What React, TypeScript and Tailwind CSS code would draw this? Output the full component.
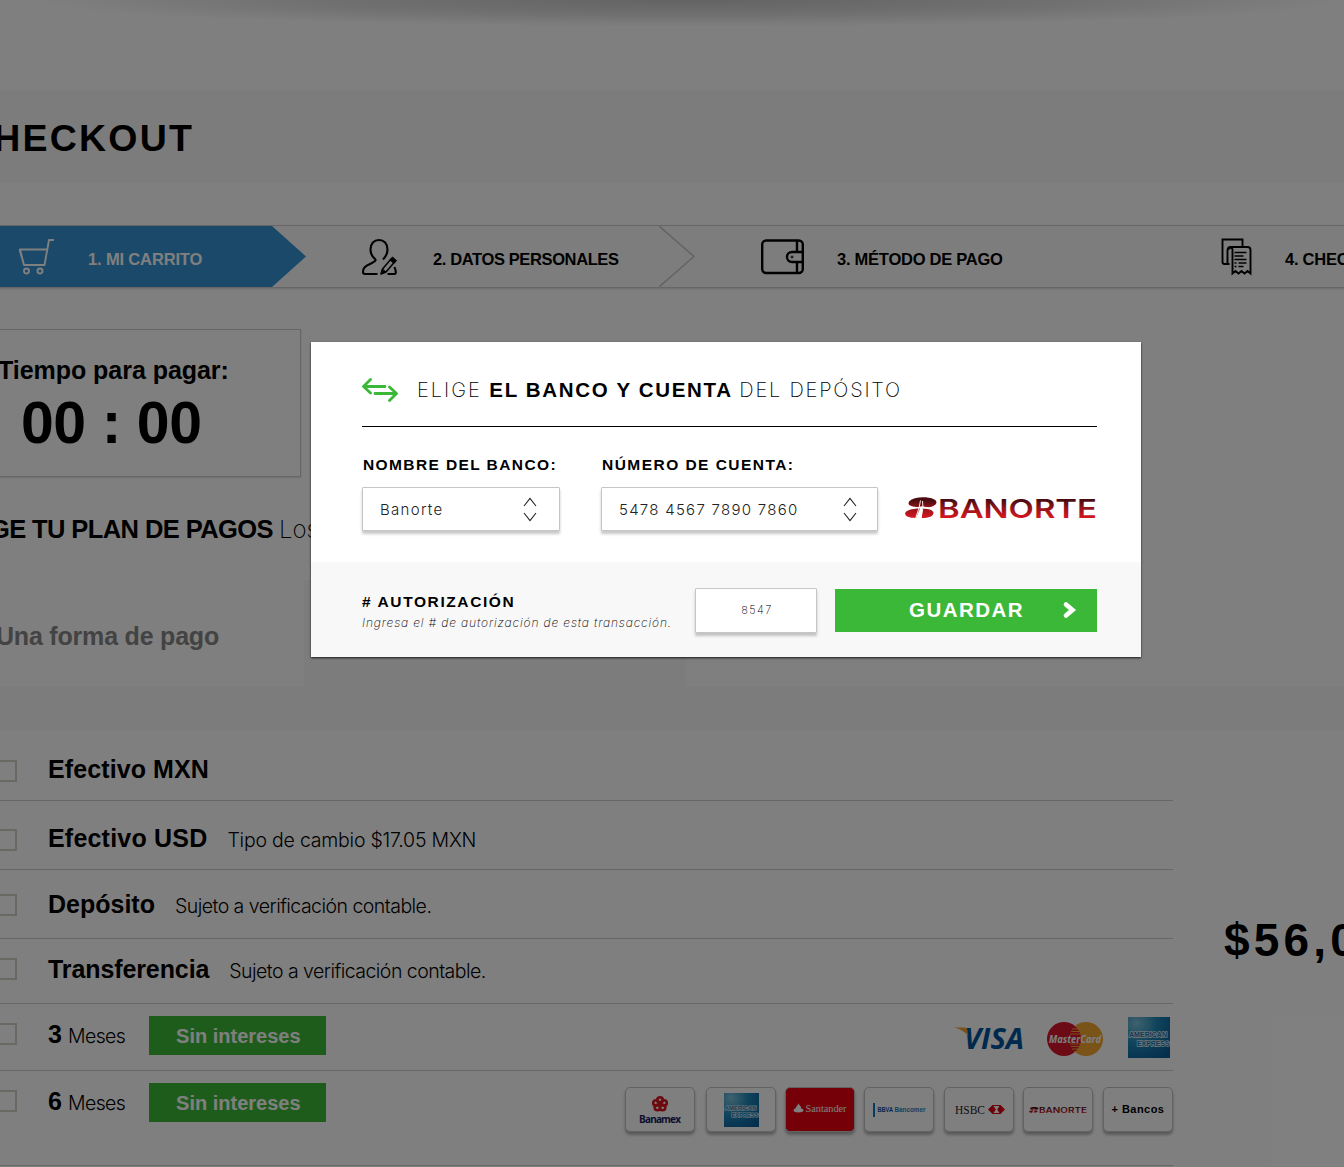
import React from "react";

const SANS = "font-['Liberation_Sans',Arial,sans-serif]";
const LIGHT = "font-['Inter',sans-serif] font-extralight";

function T({ className, children }: { className: string; children: React.ReactNode }) {
  return <span className={"whitespace-pre inline-block shrink-0 " + className}>{children}</span>;
}

function Chevrons() {
  return (
    <svg width="14" height="26" viewBox="0 0 14 26" fill="none" stroke="#222" strokeWidth="1.1">
      <path d="M1 10 7 2.500l6 7.500M1 17 7 24.500l6-7.500" />
    </svg>
  );
}

function BanorteLogo({ className, id }: { className: string; id: string }) {
  return (
    <svg className={className} viewBox="0 0 192 22" preserveAspectRatio="none">
      <defs>
        <linearGradient id={id} x1="0" y1="0" x2="0" y2="22" gradientUnits="userSpaceOnUse">
          <stop offset="0.150" stopColor="#4a0c10" />
          <stop offset="0.500" stopColor="#94131a" />
          <stop offset="0.900" stopColor="#d0161f" />
        </linearGradient>
      </defs>
      <g fill={`url(#${id})`}>
        <path d="M4 4.500C7 1.500 12 .3 18 .3c8 0 13.500 2.300 13.500 5 0 2.200-3 4.300-7.500 5.200l-7-1.200-4 1C8 9.800 3.500 8.800 3.500 6.500z" />
        <path d="M15 11.500 11 21C4 20.800.2 19.500.2 16.500c0-2.800 6-5 14.800-5z" />
        <path d="M17.500 11.500c6.500.2 11 1.800 11 4.500 0 3-4.500 5-12 5z" />
        <text x="33" y="21" fontSize="25.500" fontWeight="600" fontFamily="Inter, sans-serif" textLength="159" lengthAdjust="spacingAndGlyphs">BANORTE</text>
      </g>
      <path d="M15.500 3.500 14 11 10.500 21.500M17.500 4l.5 7-2 10.500M2 11.500c8-1.500 20-1.500 29 0" stroke="#fff" strokeWidth="0.900" fill="none" />
    </svg>
  );
}

function AmexLogo({ className, id }: { className: string; id: string }) {
  return (
    <svg className={className} viewBox="0 0 42 41" preserveAspectRatio="none">
      <defs>
        <radialGradient id={id} cx="0.2" cy="0.15" r="1">
          <stop offset="0" stopColor="#7fc4dc" />
          <stop offset="0.5" stopColor="#1f86b8" />
          <stop offset="1" stopColor="#0b5f9c" />
        </radialGradient>
      </defs>
      <rect width="42" height="41" fill={`url(#${id})`} />
      <g fontFamily="Liberation Sans, sans-serif" fontWeight="700" fontSize="7" fill="#1a76ac" stroke="#d8ecf5" strokeWidth="1.500" paintOrder="stroke">
        <text x="1" y="20" textLength="38" lengthAdjust="spacingAndGlyphs">AMERICAN</text>
        <text x="9" y="28.500" textLength="32.500" lengthAdjust="spacingAndGlyphs">EXPRESS</text>
      </g>
    </svg>
  );
}

function Chip({ red, className = "", children }: { red?: boolean; className?: string; children: React.ReactNode }) {
  return (
    <div className={"flex h-[45px] w-[70px] items-center justify-center rounded-[5px] border shadow-[0_3px_3px_rgba(0,0,0,0.3)] " + (red ? "border-[#c4c4c4] bg-[#ea0010] " : "border-[#c4c4c4] bg-white ") + className}>
      {children}
    </div>
  );
}

function Row({ h, box, text, children, right }: { h: string; box: string; text: string; children: React.ReactNode; right?: React.ReactNode }) {
  return (
    <div className={"flex w-[1173px] items-start border-b border-[#cfcfcf] " + h}>
      <div className={"-ml-[5px] h-[22px] w-[22px] shrink-0 border-2 border-[#d2d2c6] " + box} />
      <div className={"ml-[31px] flex h-[30px] items-baseline leading-[30px] " + text}>{children}</div>
      <div className="ml-auto">{right}</div>
    </div>
  );
}

const LABEL = "text-[25px] font-bold";
const DESC = "font-['Inter',sans-serif] font-light text-[19.500px]";
const VALUE = "font-['Inter',sans-serif] font-light text-[15px] text-[#222]";
const FREE = "mt-[-3px] ml-[24px] flex h-[39px] w-[177px] justify-center self-start bg-[#3cb838] pt-[5px] text-[20px] font-bold text-white";
const FIELD = "flex items-center rounded-[1px] border border-[#c6c6c6] bg-white shadow-[0_3px_3px_rgba(0,0,0,0.22)]";

export default function App() {
  return (
    <div className={"relative h-[1167px] w-[1344px] overflow-hidden bg-white text-black " + SANS}>
      <header className="h-[90px] bg-[radial-gradient(ellipse_660px_27px_at_690px_0px,rgba(0,0,0,0.22),rgba(0,0,0,0.12)_55%,transparent)]" />
      <div className="flex h-[93px] bg-[#f8f8f8]">
        <T className="-ml-[36px] pt-[28px] text-[37.500px] leading-[40px] font-bold tracking-[2.200px]">CHECKOUT</T>
      </div>

      <nav className="mt-[42px] flex h-[63px] border-t border-b border-[#cccccc] bg-[#fafafa] text-[16.500px] font-bold shadow-[0_1px_2px_rgba(0,0,0,0.15)]">
        <div className="flex w-[306px] shrink-0 items-center bg-[#3492d4] text-white [clip-path:polygon(0_0,272px_0,100%_50%,272px_100%,0_100%)]">
          <svg className="ml-[18px] h-[38px] w-[38px] shrink-0" viewBox="0 0 38 38" fill="none" stroke="#fff" strokeWidth="1.900" strokeLinejoin="round">
            <path d="M36 2h-5L26.500 27H6L2 11.500h27M1.500 11.500 6 27" />
            <circle cx="8.500" cy="33" r="2.500" />
            <circle cx="22" cy="33" r="2.500" />
          </svg>
          <T className="ml-[32px] pt-[5px] tracking-[-0.150px]">1. MI CARRITO</T>
        </div>
        <div className="flex w-[389px] shrink-0 items-center">
          <svg className="ml-[54px] h-[38px] w-[38px] shrink-0" viewBox="-0.500 0 38 38" fill="none" stroke="#000" strokeWidth="2.100" strokeLinejoin="round">
            <path d="M22.500 21.500c3-3 4.500-6 4.500-10C27 5.500 23.500 2 18.500 2S10 5.500 10 11.500c0 4 1.500 7 4.500 9.500 1.500 1.500 0 2.500-4 4.500C5 28 2.500 29.500 2.500 34c0 1.500.5 2 2 2H17M27 36h7c1.500 0 1.500-1 1-4l-1-3" />
            <path d="m22 31 9-10.500 3.500 3L25.500 34l-5 2z" strokeWidth="1.500" />
            <path d="m29.500 22 2.500-3 4 3.500-2.500 3zM20.500 36l1.500-5 3.500 3z" fill="#000" strokeWidth="1" />
          </svg>
          <T className="ml-[35px] pt-[5px] tracking-[-0.380px]">2. DATOS PERSONALES</T>
          <svg className="ml-auto h-[61px] w-[36px]" viewBox="0 0 36 61" fill="none" stroke="#c6c6c6" strokeWidth="1.500"><path d="M0 0 35 30.500 0 61" /></svg>
        </div>
        <div className="flex w-[527px] shrink-0 items-center">
          <svg className="ml-[65px] h-[38px] w-[46px] shrink-0" viewBox="0 0 46 38" fill="none" stroke="#000" strokeWidth="2.400">
            <rect x="2.200" y="2.500" width="40.600" height="32.500" rx="4" />
            <path d="M37 3v11M37 24v11M42.500 14H32a5 5 0 0 0 0 10h10.500" />
            <circle cx="32" cy="19" r="1" strokeWidth="1" />
          </svg>
          <T className="ml-[31px] pt-[5px] tracking-[-0.250px]">3. MÉTODO DE PAGO</T>
        </div>
        <div className="flex shrink-0 items-center">
          <svg className="-ml-[1px] h-[38px] w-[32px] shrink-0" viewBox="0.500 0.500 32 38" fill="none" stroke="#000" strokeWidth="1.900">
            <path d="M22 9.500V2H2v22.500c0 1.500.7 2 2 2h5M7 26.500V13c0-2.500 1-3.500 3-3.500h17c2 0 3 1 3 3V36l-3-2.500-3 2.500-3-2.500-3 2.500-3-2.500-3 2.500V12c0-2-3-2.500-4 0" />
            <path d="M14 15h12M14 18.500h9M14 22h12M14 25.500h2M18 25.500h8M14 29h2M18 29h5" strokeWidth="1.600" />
          </svg>
          <T className="ml-[32px] pt-[5px] tracking-[-0.250px]">4. CHECKOUT</T>
        </div>
      </nav>

      <section className="-ml-[10px] mt-[41px] flex h-[148px] w-[311px] flex-col border border-[#cccccc] shadow-[0_1px_2px_rgba(0,0,0,0.12)]">
        <T className="ml-[7px] mt-[25px] text-[25px] leading-[30px] font-bold tracking-[-0.040px]">Tiempo para pagar:</T>
        <T className="ml-[30px] mt-[8px] text-[59px] leading-[60px] font-bold tracking-[-0.450px]">00 : 00</T>
      </section>

      <div className="mt-[37px] flex h-[66px] items-baseline leading-[30px]">
        <T className="-ml-[48px] text-[25.500px] font-bold tracking-[-0.590px]">ELIGE TU PLAN DE PAGOS</T>
        <T className={"ml-[6px] text-[24px] " + LIGHT}>Los</T>
      </div>

      <section className="flex h-[107px] bg-white">
        <div className="flex w-[304px]"><T className="-ml-[4px] pt-[41px] text-[25px] leading-[30px] font-bold tracking-[-0.200px] text-[#868686]">Una forma de pago</T></div>
        <div className="w-[382px] bg-[#f8f8f8]" />
      </section>
      <div className="h-[43px] bg-[#f8f8f8]" />

      <div className="flex">
        <div>
          <Row h="h-[71px]" box="mt-[30px]" text="mt-[24px]"><T className={LABEL + " tracking-[0.100px]"}>Efectivo MXN</T></Row>
          <Row h="h-[69px]" box="mt-[28px]" text="mt-[22px]"><T className={LABEL + " tracking-[0.200px]"}>Efectivo USD</T><T className={DESC + " ml-[20px] tracking-[-0.220px]"}>Tipo de cambio $17.05 MXN</T></Row>
          <Row h="h-[69px]" box="mt-[24px]" text="mt-[19px]"><T className={LABEL}>Depósito</T><T className={DESC + " ml-[20px] tracking-[-0.530px]"}>Sujeto a verificación contable.</T></Row>
          <Row h="h-[65px]" box="mt-[19px]" text="mt-[15px]"><T className={LABEL + " tracking-[-0.100px]"}>Transferencia</T><T className={DESC + " ml-[20px] tracking-[-0.530px]"}>Sujeto a verificación contable.</T></Row>
          <Row h="h-[67px]" box="mt-[19px]" text="mt-[15px]" right={
            <div className="mr-[3px] flex pt-[13px]">
              <svg className="mt-[9px] h-[26px] w-[70px]" viewBox="0 0 70 26">
                <text x="10" y="23" fontSize="29" fontWeight="700" fontStyle="italic" fontFamily="Open Sans, sans-serif" fill="#00529c" textLength="60" lengthAdjust="spacingAndGlyphs">VISA</text>
                <path d="M0 1.500h10c2 0 3 .8 3.300 2.500l1 6C11 5.500 6 3 0 1.500z" fill="#f0a030" />
              </svg>
              <svg className="ml-[23px] mt-[5px] h-[34px] w-[56px]" viewBox="0 0 56 34">
                <circle cx="39" cy="17" r="17" fill="#f5a632" />
                <circle cx="17" cy="17" r="17" fill="#d8142c" />
                <path d="M28 4.500h2M25 7h7M24 9.500h9M23 12h10M23 22h10M24 24.500h9M25 27h7M27 29.500h3" stroke="#f5a632" strokeWidth="1" />
                <text x="2" y="20.500" fontSize="11" fontWeight="700" fontStyle="italic" fontFamily="Open Sans, sans-serif" fill="#fff" textLength="52" lengthAdjust="spacingAndGlyphs">MasterCard</text>
              </svg>
              <AmexLogo id="amexA" className="ml-[25px] h-[41px] w-[42px]" />
            </div>
          }>
            <T className={LABEL}>3</T><T className={DESC + " ml-[6px] tracking-[-0.570px]"}>Meses</T>
            <div className={FREE}><T className="pl-px">Sin intereses</T></div>
          </Row>
          <Row h="h-[95px]" box="mt-[19px]" text="mt-[15px]" right={
            <div className="flex w-[548px] pt-[16px]">
              <Chip>
                <svg width="46" height="30" viewBox="0 0 46 30">
                  <g fill="none" stroke="#d8141e" strokeWidth="2.600">
                    <circle cx="23" cy="5" r="2.800" /><circle cx="27" cy="8" r="2.800" /><circle cx="25.500" cy="12.500" r="2.800" /><circle cx="20.500" cy="12.500" r="2.800" /><circle cx="19" cy="8" r="2.800" />
                  </g>
                  <text x="2" y="28" fontSize="10" fontWeight="700" fontFamily="Open Sans, sans-serif" fill="#14235f" textLength="42">Banamex</text>
                </svg>
              </Chip>
              <Chip className="ml-[11px]"><AmexLogo id="amexB" className="h-[34px] w-[35px]" /></Chip>
              <Chip red className="ml-[9px]">
                <svg width="54" height="14" viewBox="0 0 54 14">
                  <path d="M5.500 0c0 2 3 3 2.700 5.500 1.500.3 2.300 1 2.300 1.700 0 1.300-2.300 2.300-5 2.300S.5 8.500.5 7.200c0-.8.900-1.500 2.200-1.700C2.500 3.500 5 3 5.500 0z" fill="#fff" />
                  <text x="12.500" y="9" fontSize="9.500" fontFamily="Liberation Serif, serif" fill="#fff" textLength="41" lengthAdjust="spacingAndGlyphs">Santander</text>
                </svg>
              </Chip>
              <Chip className="ml-[9px]">
                <svg width="54" height="14" viewBox="0 0 54 14">
                  <rect x="1" y="0" width="2" height="14" fill="#1478be" />
                  <text x="5.500" y="9" fontSize="6.500" fontWeight="700" fontFamily="Liberation Sans, sans-serif" fill="#0f4a94" textLength="15.500" lengthAdjust="spacingAndGlyphs">BBVA</text>
                  <text x="22.500" y="9" fontSize="6.500" fontWeight="700" fontFamily="Liberation Sans, sans-serif" fill="#2a7fc0" textLength="31" lengthAdjust="spacingAndGlyphs">Bancomer</text>
                </svg>
              </Chip>
              <Chip className="ml-[10px]">
                <svg className="ml-[2px]" width="50" height="14" viewBox="0 0 50 14">
                  <text x="0" y="11" fontSize="13" fontFamily="Liberation Serif, serif" fill="#222" textLength="30" lengthAdjust="spacingAndGlyphs">HSBC</text>
                  <path d="M33 6.500l4.500-4.500h8L50 6.500 45.500 11h-8z" fill="#db0011" />
                  <path d="M38.500 3h6l-2.300 3.500L44.500 10h-6l2.300-3.500z" fill="#fff" />
                </svg>
              </Chip>
              <Chip className="ml-[9px]"><BanorteLogo id="banB" className="h-[6px] w-[58px]" /></Chip>
              <Chip className="ml-[10px]"><T className="text-[11px] font-bold tracking-[0.450px]">+ Bancos</T></Chip>
            </div>
          }>
            <T className={LABEL}>6</T><T className={DESC + " ml-[6px] tracking-[-0.570px]"}>Meses</T>
            <div className={FREE}><T className="pl-px">Sin intereses</T></div>
          </Row>
        </div>
        <T className="ml-[51px] pt-[185px] text-[46px] leading-[50px] font-bold tracking-[4.200px]">$56,000</T>
      </div>

      <div className="absolute inset-0 flex items-start justify-center bg-black/50">
        <div className="ml-[108px] mt-[342px] h-[315px] w-[830px] bg-white shadow-[0_1px_2px_rgba(0,0,0,0.8)]">
          <div className="mr-[44px] ml-[51px] flex h-[85px] border-b border-black">
            <svg className="mt-[35px] h-[25px] w-[36px]" viewBox="0 0 36 25" fill="none" stroke="#3cb838" strokeWidth="2.800" strokeLinecap="round" strokeLinejoin="round">
              <path d="M8.500 2.500 1.500 9.500l7 6.500M2.500 9.500H23M27.500 10 34.500 16.500l-7 7M13 16.500h21" />
            </svg>
            <div className="ml-[19px] flex items-baseline pt-[33px] text-[20.500px] leading-[30px]">
              <T className={LIGHT + " text-[20px] tracking-[2px]"}>ELIGE</T>
              <T className="ml-[7.500px] font-bold tracking-[1.680px]">EL BANCO Y CUENTA</T>
              <T className={LIGHT + " ml-[6.500px] text-[20px] tracking-[1.800px]"}>DEL DEPÓSITO</T>
            </div>
          </div>
          <div className="flex h-[135px] pl-[51px]">
            <div className="flex w-[198px] flex-col">
              <T className="ml-px pt-[28px] text-[15.500px] leading-[20px] font-bold tracking-[1.400px]">NOMBRE DEL BANCO:</T>
              <div className={FIELD + " mt-[12px] h-[44px] justify-between pr-[22px] pl-[17px]"}>
                <T className={VALUE + " pt-[2px] tracking-[1.300px]"}>Banorte</T><Chevrons />
              </div>
            </div>
            <div className="ml-[41px] flex w-[277px] flex-col">
              <T className="ml-px pt-[28px] text-[15.500px] leading-[20px] font-bold tracking-[1.460px]">NÚMERO DE CUENTA:</T>
              <div className={FIELD + " mt-[12px] h-[44px] justify-between pr-[20px] pl-[17px]"}>
                <T className={VALUE + " pt-[2px] tracking-[1.270px]"}>5478 4567 7890 7860</T><Chevrons />
              </div>
            </div>
            <BanorteLogo id="banA" className="mt-[70px] ml-[27px] h-[22px] w-[192px]" />
          </div>
          <div className="flex h-[95px] bg-[#f8f8f8] pl-[51px]">
            <div className="flex w-[333px] flex-col items-start pt-[30px]">
              <T className="text-[15.500px] leading-[20px] font-bold tracking-[1.600px]">{"# AUTORIZACIÓN"}</T>
              <T className={LIGHT + " mt-[1px] text-[12px] leading-[20px] tracking-[0.860px] italic"}>Ingresa el # de autorización de esta transacción.</T>
            </div>
            <div className={FIELD + " mt-[26px] h-[45px] w-[122px] justify-center"}>
              <T className={LIGHT + " pl-[2px] text-[11px] tracking-[1.400px]"}>8547</T>
            </div>
            <div className="mt-[27px] ml-[18px] flex h-[43px] w-[262px] items-center bg-[#3cb838] text-white">
              <T className="ml-[74px] -mt-[1px] text-[20.500px] font-bold tracking-[1.450px]">GUARDAR</T>
              <svg className="mr-[20px] ml-auto -mt-px h-[18px] w-[15px]" viewBox="0 0 15 18" fill="none" stroke="#fff" strokeWidth="4.600" strokeLinecap="round"><path d="m4 3.500 6.500 5.500L4 14.500" /></svg>
            </div>
          </div>
        </div>
      </div>
    </div>
  );
}
